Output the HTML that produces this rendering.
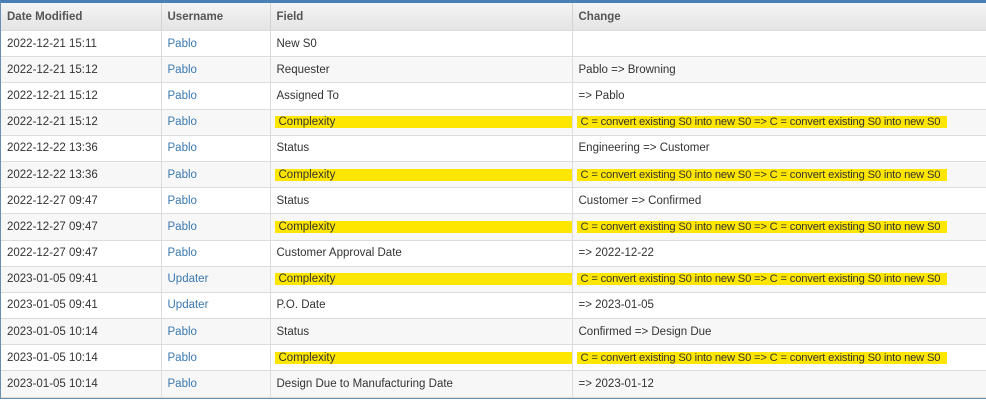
<!DOCTYPE html>
<html><head><style>
body{margin:0;background:#fff;width:986px;height:406px;overflow:hidden;font-family:"Liberation Sans",Arial,sans-serif;font-size:11.5px;color:#333}
.wrap{position:absolute;left:0;top:0;width:990px;border-top:3px solid #4a7fb5;border-left:1px solid #6a8fb0;border-bottom:1px solid #6a8fb0;}
table{border-collapse:collapse;table-layout:fixed;width:990px}
td,th{border-right:1px solid #dcdcdc;border-bottom:1px solid #dcdcdc;padding:0 0 0 6px;height:25.2px;text-align:left;white-space:nowrap;overflow:hidden}
th{height:27px;background:linear-gradient(#f4f4f4,#e4e4e4);color:#555;font-weight:bold;border-right:1px solid #d4d4d4}
tr:nth-child(odd) td{background:#f7f7f7}
a{color:#3a78b0;text-decoration:none}
.h{background:#ffe600;display:inline-block;line-height:12px;padding:0 0 0 4px;margin-left:-2px;white-space:nowrap;overflow:visible}
.hf{width:298px}
.hc{width:366px;letter-spacing:-0.18px;font-size:11.2px}
</style></head><body>
<div class="wrap"><table>
<colgroup><col style="width:160px"><col style="width:109px"><col style="width:302px"><col></colgroup>
<tr><th>Date Modified</th><th>Username</th><th>Field</th><th>Change</th></tr>
<tr><td>2022-12-21 15:11</td><td><a>Pablo</a></td><td>New S0</td><td></td></tr>
<tr><td>2022-12-21 15:12</td><td><a>Pablo</a></td><td>Requester</td><td>Pablo =&gt; Browning</td></tr>
<tr><td>2022-12-21 15:12</td><td><a>Pablo</a></td><td>Assigned To</td><td>=&gt; Pablo</td></tr>
<tr><td>2022-12-21 15:12</td><td><a>Pablo</a></td><td><span class="h hf">Complexity</span></td><td><span class="h hc">C = convert existing S0 into new S0 =&gt; C = convert existing S0 into new S0</span></td></tr>
<tr><td>2022-12-22 13:36</td><td><a>Pablo</a></td><td>Status</td><td>Engineering =&gt; Customer</td></tr>
<tr><td>2022-12-22 13:36</td><td><a>Pablo</a></td><td><span class="h hf">Complexity</span></td><td><span class="h hc">C = convert existing S0 into new S0 =&gt; C = convert existing S0 into new S0</span></td></tr>
<tr><td>2022-12-27 09:47</td><td><a>Pablo</a></td><td>Status</td><td>Customer =&gt; Confirmed</td></tr>
<tr><td>2022-12-27 09:47</td><td><a>Pablo</a></td><td><span class="h hf">Complexity</span></td><td><span class="h hc">C = convert existing S0 into new S0 =&gt; C = convert existing S0 into new S0</span></td></tr>
<tr><td>2022-12-27 09:47</td><td><a>Pablo</a></td><td>Customer Approval Date</td><td>=&gt; 2022-12-22</td></tr>
<tr><td>2023-01-05 09:41</td><td><a>Updater</a></td><td><span class="h hf">Complexity</span></td><td><span class="h hc">C = convert existing S0 into new S0 =&gt; C = convert existing S0 into new S0</span></td></tr>
<tr><td>2023-01-05 09:41</td><td><a>Updater</a></td><td>P.O. Date</td><td>=&gt; 2023-01-05</td></tr>
<tr><td>2023-01-05 10:14</td><td><a>Pablo</a></td><td>Status</td><td>Confirmed =&gt; Design Due</td></tr>
<tr><td>2023-01-05 10:14</td><td><a>Pablo</a></td><td><span class="h hf">Complexity</span></td><td><span class="h hc">C = convert existing S0 into new S0 =&gt; C = convert existing S0 into new S0</span></td></tr>
<tr><td>2023-01-05 10:14</td><td><a>Pablo</a></td><td>Design Due to Manufacturing Date</td><td>=&gt; 2023-01-12</td></tr>
</table></div>
</body></html>
